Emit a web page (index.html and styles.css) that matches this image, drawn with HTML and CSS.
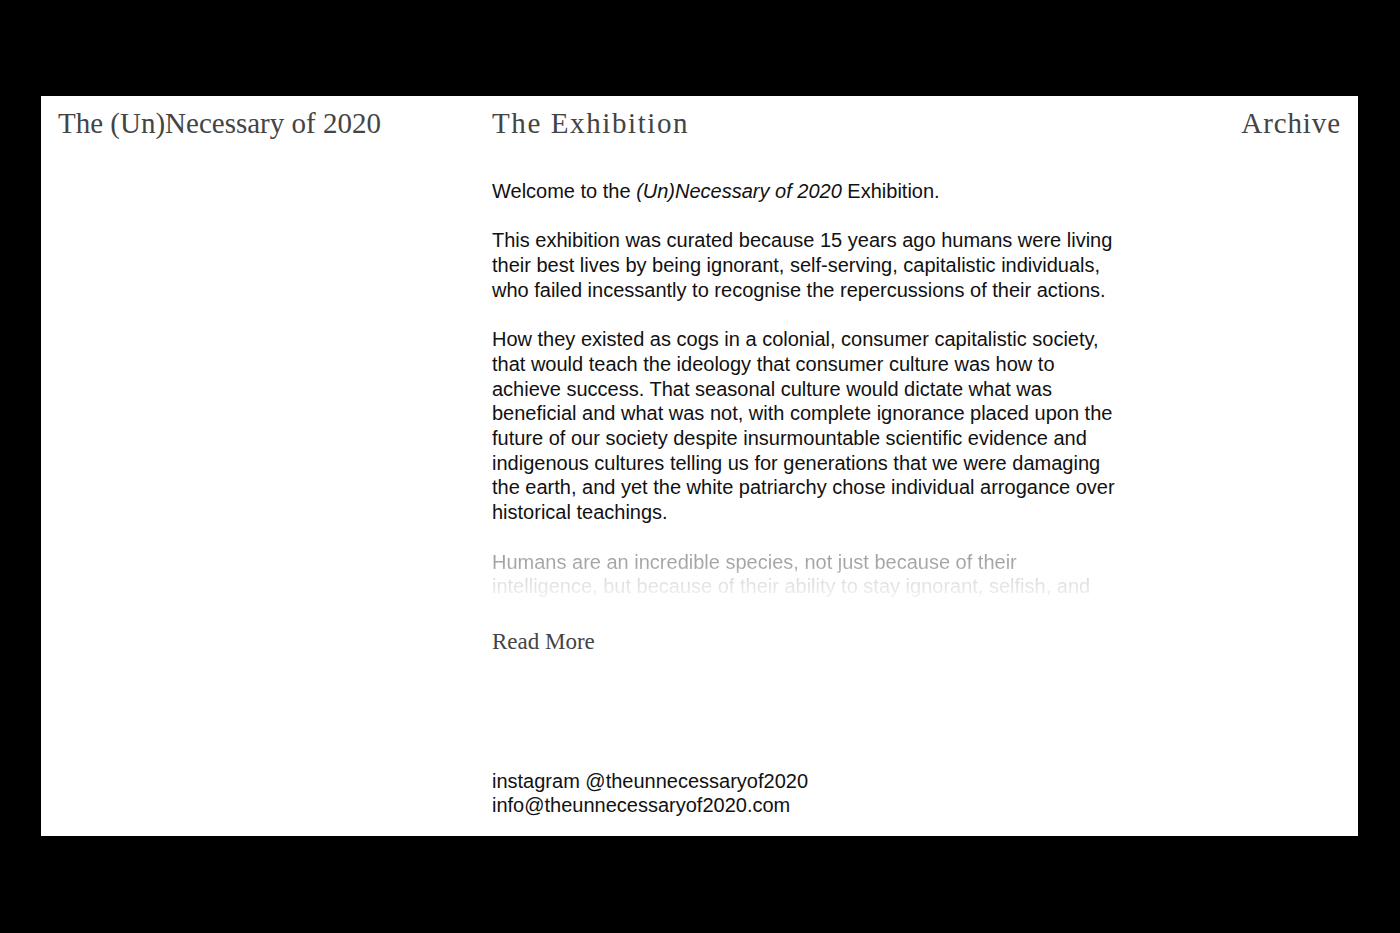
FILE: index.html
```html
<!DOCTYPE html>
<html lang="en">
<head>
<meta charset="utf-8">
<title>The (Un)Necessary of 2020</title>
<link rel="stylesheet" href="styles.css">
</head>
<body>
<div class="panel">
  <header class="top">
    <div class="brand">The (Un)Necessary of 2020</div>
    <div class="nav-title">The Exhibition</div>
    <div class="archive">Archive</div>
  </header>
  <main class="content">
    <p>Welcome to the <em>(Un)Necessary of 2020</em> Exhibition.</p>
    <p>This exhibition was curated because 15 years ago humans were living<br>their best lives by being ignorant, self-serving, capitalistic individuals,<br>who failed incessantly to recognise the repercussions of their actions.</p>
    <p>How they existed as cogs in a colonial, consumer capitalistic society,<br>that would teach the ideology that consumer culture was how to<br>achieve success. That seasonal culture would dictate what was<br>beneficial and what was not, with complete ignorance placed upon the<br>future of our society despite insurmountable scientific evidence and<br>indigenous cultures telling us for generations that we were damaging<br>the earth, and yet the white patriarchy chose individual arrogance over<br>historical teachings.</p>
    <p class="fade">Humans are an incredible species, not just because of their<br>intelligence, but because of their ability to stay ignorant, selfish, and</p>
    <div class="more">Read More</div>
    <div class="contact">
      <div>instagram @theunnecessaryof2020</div>
      <div>info@theunnecessaryof2020.com</div>
    </div>
  </main>
</div>
</body>
</html>
```
FILE: styles.css
```css
html, body { margin: 0; padding: 0; }
body {
  background: #000;
  height: 933px;
  padding: 96px 42px 0 41px;
  box-sizing: border-box;
}
.panel {
  background: #fff;
  height: 740px;
  display: grid;
  grid-template-columns: 451px 1fr auto;
  grid-template-rows: auto 1fr;
  padding: 0 17px 0 0;
}
.top { display: contents; }
.brand, .nav-title, .archive {
  font-family: "Liberation Serif", "DejaVu Serif", serif;
  font-weight: 400;
  font-size: 29px;
  color: #444;
  line-height: 1;
  padding-top: 13px;
}
.brand { padding-left: 17px; }
.nav-title { letter-spacing: 1.6px; }
.archive { grid-column: 3; letter-spacing: 0.9px; }
.content {
  grid-column: 2 / 4;
  grid-row: 2;
  width: 680px;
  display: flex;
  flex-direction: column;
  padding-top: 41px;
  padding-bottom: 18px;
  font-family: "Liberation Sans", Arial, sans-serif;
  font-size: 20px;
  line-height: 24.7px;
  color: #111;
  white-space: nowrap;
}
.content p { margin: 0 0 24.7px 0; }
.content em { font-style: italic; }
.fade {
  height: 49px;
  overflow: hidden;
  background: linear-gradient(#9c9c9c, #a8a8a8 35%, #dcdcdc 60%, #f0f0f0 95%);
  -webkit-background-clip: text;
  background-clip: text;
  color: transparent;
}
.more {
  font-family: "Liberation Serif", "DejaVu Serif", serif;
  font-size: 23px;
  color: #444;
  margin-top: 7px;
}
.contact { margin-top: auto; }
```
